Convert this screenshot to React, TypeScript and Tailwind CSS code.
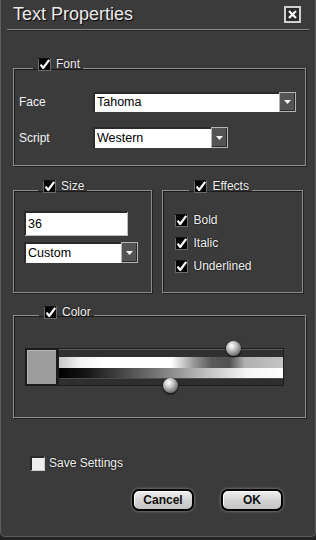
import type { ReactNode } from 'react';

const FONT = { fontFamily: '"Liberation Sans", Arial, sans-serif' };

function CheckMark() {
  return (
    <svg width="13" height="13" viewBox="0 0 13 13" className="shrink-0">
      <rect x="0.5" y="0.5" width="12" height="12" fill="#050505" stroke="#6a6a6a" />
      <rect x="0" y="0" width="12" height="1" fill="#111" />
      <path d="M2.6 6.6 L5.2 10 L11.2 1.8" fill="none" stroke="#fff" strokeWidth="2.2" strokeLinejoin="round" />
    </svg>
  );
}

function Group({
  label,
  className,
  legendPad,
  children,
}: {
  label: string;
  className?: string;
  legendPad: string;
  children: ReactNode;
}) {
  return (
    <fieldset
      className={`border border-[#8d8d8d] shadow-[inset_1px_1px_0_#1c1c1c,1px_1px_0_#202020] ${className ?? ''}`}
    >
      <legend className={`ml-[14px] flex items-center gap-[5px] pl-[5px] pr-[3px] ${legendPad}`}>
        <CheckMark />
        <span className="text-[12px] leading-[14px] text-[#f2f2f2] [text-shadow:0_0_2px_#000]">
          {label}
        </span>
      </legend>
      {children}
    </fieldset>
  );
}

function Arrow() {
  return (
    <div className="flex w-[17px] shrink-0 items-center justify-center border border-[#b4b4b4] bg-[#545454] shadow-[inset_-1px_-1px_0_#2a2a2a]">
      <svg width="7" height="4" viewBox="0 0 7 4">
        <path d="M0 0 H7 L3.5 4 Z" fill="#f4f4f4" />
      </svg>
    </div>
  );
}

function Select({ value, className }: { value: string; className: string }) {
  return (
    <div className={`flex bg-[#1a1a1a] ${className}`}>
      <div className="flex flex-1 items-center border-t-2 border-l-2 border-[#2b2b2b] bg-white pl-[2px] text-[12.5px] text-black">
        {value}
      </div>
      <Arrow />
    </div>
  );
}

function Knob({ left, top }: { left: number; top: number }) {
  return (
    <div
      className="absolute h-[15px] w-[15px] rounded-full bg-[radial-gradient(circle_at_38%_32%,#ffffff_0%,#d6d6d6_25%,#8a8a8a_60%,#3a3a3a_100%)] shadow-[0_1px_2px_#000]"
      style={{ left, top }}
    />
  );
}

function Button({ label }: { label: string }) {
  return (
    <button
      type="button"
      className="flex h-[22px] w-[62px] items-center justify-center rounded-[7px] border-2 border-[#050505] bg-[linear-gradient(#f0f0f0,#d4d4d4_50%,#c4c4c4)] text-[12px] font-bold text-[#111] shadow-[0_0_3px_#9a9a9a,inset_1px_1px_0_#fff]"
    >
      {label}
    </button>
  );
}

export default function App() {
  return (
    <div className="h-[540px] w-[316px] bg-[#232323]" style={FONT}>
      <div className="flex h-[537px] flex-col rounded-b-[5px] border-x border-b border-[#5e5e5e] bg-[#3b3b3b] text-[12px] text-[#f2f2f2]">
        {/* title bar */}
        <div className="flex h-[29px] items-center justify-between pl-[12px] pr-[14px]">
          <span className="text-[18px] text-[#ececec] [text-shadow:1px_1px_1px_#000]">Text Properties</span>
          <div className="flex h-[17px] w-[17px] items-center justify-center border-2 border-[#cfcfcf] bg-[#2a2a2a]">
            <svg width="9" height="9" viewBox="0 0 9 9">
              <path d="M1 1 L8 8 M8 1 L1 8" stroke="#fff" strokeWidth="2.2" />
            </svg>
          </div>
        </div>
        <div className="mx-[6px] h-[2px] border-t border-b border-t-[#8a8a8a] border-b-[#242424]" />

        {/* Font */}
        <Group label="Font" className="mx-[12px] mt-[26px] w-[293px] px-[5px] pt-[13px] pb-[17px]" legendPad="pb-[8px]">
          <div className="flex h-[19px] items-center">
            <span className="w-[74px]">Face</span>
            <Select value="Tahoma" className="h-[20px] w-[203px]" />
          </div>
          <div className="mt-[16px] flex h-[21px] items-center">
            <span className="w-[74px]">Script</span>
            <Select value="Western" className="h-[21px] w-[135px]" />
          </div>
        </Group>

        {/* Size + Effects */}
        <div className="mx-[12px] mt-[13px] flex gap-[10px]">
          <Group label="Size" className="w-[141px] px-[10px] pt-[10px] pb-[22px]" legendPad="pb-[8px]">
            <div className="flex h-[24px] w-[103px] items-center border-t-2 border-l-2 border-[#2b2b2b] bg-white pl-[2px] text-[12.5px] text-black shadow-[1px_1px_0_#bdbdbd]">
              36
            </div>
            <Select value="Custom" className="mt-[7px] h-[21px] w-[114px]" />
          </Group>
          <Group label="Effects" className="w-[142px] px-[12px] pt-[10px] pb-[17px]" legendPad="pb-[8px]">
            <div className="flex flex-col gap-[5px]">
              {['Bold', 'Italic', 'Underlined'].map((e) => (
                <div key={e} className="flex h-[18px] items-center gap-[5px]">
                  <CheckMark />
                  <span className="[text-shadow:0_0_2px_#000]">{e}</span>
                </div>
              ))}
            </div>
          </Group>
        </div>

        {/* Color */}
        <Group label="Color" className="mx-[12px] mt-[12px] w-[293px] px-[11px] pt-[23px] pb-[31px]" legendPad="pb-[6px]">
          <div className="relative flex h-[38px]">
            <div className="w-[33px] border-2 border-[#1c1c1c] bg-[#9d9d9d] shadow-[inset_1px_1px_0_#b5b5b5]" />
            <div className="flex w-[226px] flex-col border border-[#1c1c1c] bg-[#222]">
              <div className="h-[8px] border-t border-[#5a5a5a] bg-[#303030]" />
              <div className="h-[11px] bg-[linear-gradient(90deg,#c8c8c8_0%,#f4f4f4_10%,#ffffff_20%,#ffffff_50%,#9a9a9a_60%,#5a5a5a_68%,#505050_76%,#b0b0b0_83%,#c4c4c4_100%)]" />
              <div className="h-[10px] bg-[linear-gradient(90deg,#000_0%,#151515_12%,#6a6a6a_40%,#b4b4b4_62%,#f6f6f6_84%,#ffffff_100%)]" />
              <div className="flex-1 border-t border-[#4a4a4a] bg-[#2e2e2e]" />
            </div>
            <Knob left={201} top={-7} />
            <Knob left={138} top={30} />
          </div>
        </Group>

        {/* save settings */}
        <div className="mt-[36px] ml-[29px] flex items-center gap-[4px]">
          <div className="h-[15px] w-[15px] border-t-2 border-l-2 border-t-[#2a2a2a] border-l-[#2a2a2a] border-r border-b border-r-[#cfcfcf] border-b-[#cfcfcf] bg-[#eeeeee]" />
          <span className="[text-shadow:0_0_2px_#000]">Save Settings</span>
        </div>

        {/* buttons */}
        <div className="mt-[17px] ml-[131px] flex gap-[27px]">
          <Button label="Cancel" />
          <Button label="OK" />
        </div>
      </div>
    </div>
  );
}
